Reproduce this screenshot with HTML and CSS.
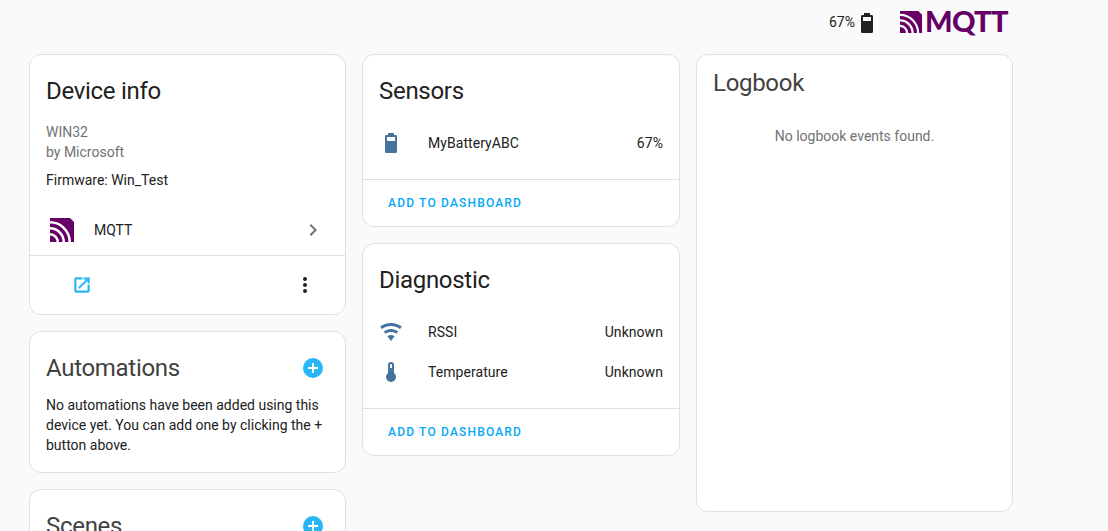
FILE: index.html
```html
<!DOCTYPE html>
<html lang="en">
<head>
<meta charset="utf-8">
<title>Device</title>
<link rel="stylesheet" href="styles.css">
</head>
<body>
<header class="top">
  <span class="batt-text">67%</span>
  <svg class="batt-icon" viewBox="0 0 24 24"><path d="M16,10H8V6H16M16.67,4H15V2H9V4H7.33A1.33,1.33 0 0,0 6,5.33V20.67C6,21.4 6.6,22 7.33,22H16.67A1.33,1.33 0 0,0 18,20.67V5.33C18,4.6 17.4,4 16.67,4Z"/></svg>
  <div class="brand">
    <svg class="brand-mark" viewBox="0 0 24 24"><path class="mark-fill" d="M0 17.500A6.500 6.500 0 0 1 6.500 24H0Z"/><path class="mark-arc" d="M0 13.250A10.750 10.750 0 0 1 10.750 24"/><path class="mark-arc" d="M0 7.250A16.750 16.750 0 0 1 16.750 24"/><path class="mark-fill" d="M0 0H20L24 4V24H21A21 21 0 0 0 0 3Z"/></svg>
    <span class="brand-name">MQTT</span>
  </div>
</header>
<main class="columns">
  <div class="col">
    <section class="card info">
      <h2 class="card-title">Device info</h2>
      <div class="muted">WIN32</div>
      <div class="muted">by Microsoft</div>
      <div class="firmware">Firmware: Win_Test</div>
      <div class="integration">
        <svg class="mark" viewBox="0 0 24 24"><path class="mark-fill" d="M0 17.500A6.500 6.500 0 0 1 6.500 24H0Z"/><path class="mark-arc" d="M0 13.250A10.750 10.750 0 0 1 10.750 24"/><path class="mark-arc" d="M0 7.250A16.750 16.750 0 0 1 16.750 24"/><path class="mark-fill" d="M0 0H20L24 4V24H21A21 21 0 0 0 0 3Z"/></svg>
        <span class="integration-name">MQTT</span>
        <svg class="chev" viewBox="0 0 24 24"><path d="M8.59,16.58L13.17,12L8.59,7.41L10,6L16,12L10,18L8.59,16.58Z"/></svg>
      </div>
      <div class="actions">
        <svg class="open" viewBox="0 0 24 24"><path d="M14,3V5H17.59L7.76,14.83L9.17,16.24L19,6.41V10H21V3M19,19H5V5H12V3H5C3.89,3 3,3.9 3,5V19A2,2 0 0,0 5,21H19A2,2 0 0,0 21,19V12H19V19Z"/></svg>
        <svg class="dots" viewBox="0 0 24 24"><path d="M12,16A2,2 0 0,1 14,18A2,2 0 0,1 12,20A2,2 0 0,1 10,18A2,2 0 0,1 12,16M12,10A2,2 0 0,1 14,12A2,2 0 0,1 12,14A2,2 0 0,1 10,12A2,2 0 0,1 12,10M12,4A2,2 0 0,1 14,6A2,2 0 0,1 12,8A2,2 0 0,1 10,6A2,2 0 0,1 12,4Z"/></svg>
      </div>
    </section>
    <section class="card related">
      <div class="related-head">
        <h2 class="related-title">Automations</h2>
        <svg class="plus" viewBox="0 0 24 24"><path d="M17,13H13V17H11V13H7V11H11V7H13V11H17M12,2A10,10 0 0,0 2,12A10,10 0 0,0 12,22A10,10 0 0,0 22,12A10,10 0 0,0 12,2Z"/></svg>
      </div>
      <p class="related-text">No automations have been added using this device yet. You can add one by clicking the + button above.</p>
    </section>
    <section class="card related scenes">
      <div class="related-head">
        <h2 class="related-title">Scenes</h2>
        <svg class="plus" viewBox="0 0 24 24"><path d="M17,13H13V17H11V13H7V11H11V7H13V11H17M12,2A10,10 0 0,0 2,12A10,10 0 0,0 12,22A10,10 0 0,0 22,12A10,10 0 0,0 12,2Z"/></svg>
      </div>
    </section>
  </div>
  <div class="col">
    <section class="card entities">
      <h2 class="card-title">Sensors</h2>
      <div class="rows">
        <div class="row">
          <svg class="state-icon" viewBox="0 0 24 24"><path d="M16,10H8V6H16M16.67,4H15V2H9V4H7.33A1.33,1.33 0 0,0 6,5.33V20.67C6,21.4 6.6,22 7.33,22H16.67A1.33,1.33 0 0,0 18,20.67V5.33C18,4.6 17.4,4 16.67,4Z"/></svg>
          <span class="row-name">MyBatteryABC</span><span class="row-value">67%</span>
        </div>
      </div>
      <div class="add"><span class="add-link">ADD TO DASHBOARD</span></div>
    </section>
    <section class="card entities">
      <h2 class="card-title">Diagnostic</h2>
      <div class="rows">
        <div class="row">
          <svg class="state-icon" viewBox="0 0 24 24"><path d="M12,21L15.6,16.2C14.6,15.45 13.35,15 12,15C10.65,15 9.4,15.45 8.4,16.2L12,21M12,3C7.95,3 4.21,4.34 1.2,6.6L3,9C5.5,7.12 8.62,6 12,6C15.38,6 18.5,7.12 21,9L22.8,6.6C19.79,4.34 16.05,3 12,3M12,9C9.3,9 6.81,9.89 4.8,11.4L6.6,13.8C8.1,12.67 9.97,12 12,12C14.03,12 15.9,12.67 17.4,13.8L19.2,11.4C17.19,9.89 14.7,9 12,9Z"/></svg>
          <span class="row-name">RSSI</span><span class="row-value">Unknown</span>
        </div>
        <div class="row">
          <svg class="state-icon" viewBox="0 0 24 24"><path d="M15 13V5A3 3 0 0 0 9 5V13A5 5 0 1 0 15 13M12 4A1 1 0 0 1 13 5V8H11V5A1 1 0 0 1 12 4Z"/></svg>
          <span class="row-name">Temperature</span><span class="row-value">Unknown</span>
        </div>
      </div>
      <div class="add"><span class="add-link">ADD TO DASHBOARD</span></div>
    </section>
  </div>
  <div class="col">
    <section class="card logbook">
      <h2 class="logbook-title">Logbook</h2>
      <p class="logbook-empty">No logbook events found.</p>
    </section>
  </div>
</main>
</body>
</html>
```
FILE: styles.css
```css
* { box-sizing: border-box; }
html, body { margin: 0; height: 531px; overflow: hidden; }
body { background: #fafafa; font-family: Roboto, sans-serif; color: #212121; font-size: 14px; line-height: 20px; }
.top { height: 54px; padding: 0 99px 11px 0; display: flex; align-items: center; justify-content: flex-end; }
.batt-text { font-size: 14px; }
.batt-icon { width: 24px; height: 24px; fill: #212121; margin-top: 2px; }
.brand { display: flex; align-items: center; margin-left: 21px; width: 109px; height: 26px; }
.brand-mark { width: 22px; height: 22px; flex: none; }
.mark-fill { fill: #660066; }
.mark-arc { fill: none; stroke: #660066; stroke-width: 3.5; }
.brand-name { font-family: Lato, sans-serif; font-weight: 900; font-size: 29px; line-height: 26px; color: #660066; margin: -2px 0 0 3px; letter-spacing: -0.7px; }
.columns { display: grid; grid-template-columns: 317px 318px 317px; column-gap: 16px; margin-left: 29px; align-items: start; }
.col { display: flex; flex-direction: column; gap: 16px; }
.card { background: #fff; border: 1px solid #e0e0e0; border-radius: 12px; }
.card-title { margin: 0; padding: 20px 16px 0; font-size: 24px; line-height: 32px; font-weight: 400; letter-spacing: -0.3px; color: #212121; }
.info { height: 261px; }
.muted { padding: 0 16px; color: #727272; }
.info .card-title { margin-bottom: 15px; }
.firmware { padding: 0 16px; margin-top: 8px; }
.integration { display: flex; align-items: center; margin-top: 15px; padding: 0 20px; height: 50px; }
.mark { width: 24px; height: 24px; flex: none; }
.integration-name { margin-left: 20px; flex: 1; }
.chev { width: 24px; height: 24px; fill: #727272; }
.actions { height: 58px; border-top: 1px solid #e0e0e0; display: flex; align-items: center; justify-content: space-between; padding: 0 28px 0 42px; }
.open { width: 20px; height: 20px; fill: #29b6f6; stroke: #29b6f6; stroke-width: 0.6; }
.dots { width: 24px; height: 24px; fill: #212121; }
.related { padding: 0 16px; }
.scenes { height: 100px; }
.related-head { display: flex; align-items: center; justify-content: space-between; padding: 20px 4px 0 0; height: 52px; }
.related-title { margin: 0; font-size: 24px; line-height: 32px; font-weight: 400; letter-spacing: -0.3px; color: #424242; }
.plus { width: 24px; height: 24px; fill: #29b6f6; }
.related-text { margin: 11px 0 17px; }
.rows { padding: 16px; }
.row { display: flex; align-items: center; height: 40px; letter-spacing: 0.06px; }
.state-icon { width: 24px; height: 24px; fill: #44739e; flex: none; }
.row-name { margin-left: 25px; flex: 1; }
.add { border-top: 1px solid #e0e0e0; height: 47px; display: flex; align-items: center; padding-left: 25px; }
.add-link { font-size: 12px; font-weight: 500; letter-spacing: 1.18px; color: #03a9f4; }
.logbook { height: 458px; }
.logbook-title { margin: 0; padding: 12px 16px 0; font-size: 24px; line-height: 32px; font-weight: 400; letter-spacing: -0.3px; color: #424242; }
.logbook-empty { margin: 27px 0 0; text-align: center; color: #727272; }
```
